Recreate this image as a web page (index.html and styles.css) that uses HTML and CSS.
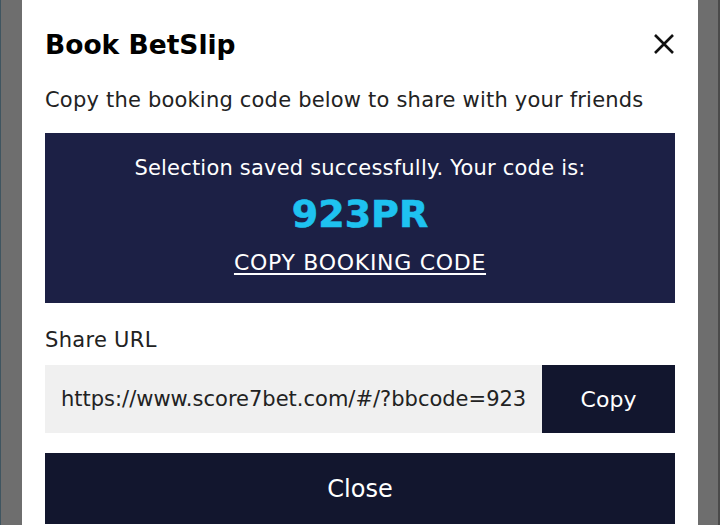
FILE: index.html
```html
<!DOCTYPE html>
<html lang="en">
<head>
<meta charset="utf-8">
<title>Book BetSlip</title>
<link rel="stylesheet" href="styles.css">
</head>
<body>
<div class="backdrop">
  <div class="modal">
    <div class="header">
      <h1 class="title">Book BetSlip</h1>
      <button class="close-x" aria-label="Close">
        <svg width="22" height="22" viewBox="0 0 22 22"><path d="M2 2 L20 20 M20 2 L2 20" stroke="#111" stroke-width="2.6" fill="none"/></svg>
      </button>
    </div>
    <p class="subtitle">Copy the booking code below to share with your friends</p>
    <div class="code-box">
      <div class="code-msg">Selection saved successfully. Your code is:</div>
      <div class="code">923PR</div>
      <a class="copy-code" href="#">COPY BOOKING CODE</a>
    </div>
    <div class="share-label">Share URL</div>
    <div class="share-row">
      <input class="share-input" type="text" value="https://www.score7bet.com/#/?bbcode=923PR" readonly>
      <button class="copy-btn">Copy</button>
    </div>
    <button class="close-btn">Close</button>
  </div>
</div>
</body>
</html>
```
FILE: styles.css
```css
html, body {
  margin: 0;
  padding: 0;
  height: 100%;
}
body {
  background: #6e6e6e;
  font-family: "DejaVu Sans", "Liberation Sans", sans-serif;
  overflow: hidden;
}
.backdrop {
  height: 525px;
  padding: 0 20px 0 21px;
  box-sizing: border-box;
  border-left: 1px solid #3f5560;
  border-right: 2px solid #4a4a4a;
}
.modal {
  background: #fff;
  height: 100%;
  padding: 22px 23px 0 23px;
  box-sizing: border-box;
  display: flex;
  flex-direction: column;
}
.header {
  display: flex;
  align-items: center;
  justify-content: space-between;
  height: 44px;
}
.title {
  margin: 0;
  font-size: 26.5px;
  font-weight: 700;
  color: #000;
}
.close-x {
  background: none;
  border: 0;
  padding: 0;
  width: 22px;
  height: 22px;
}
.subtitle {
  margin: 20px 0 0;
  font-size: 21px;
  letter-spacing: 0.2px;
  line-height: 28px;
  color: #222;
}
.code-box {
  margin-top: 19px;
  height: 170px;
  background: #1c2045;
  color: #fff;
  display: flex;
  flex-direction: column;
  align-items: center;
  padding-top: 21px;
  box-sizing: border-box;
}
.code-msg {
  font-size: 21px;
  letter-spacing: 0.2px;
  line-height: 28px;
}
.code {
  font-size: 38px;
  font-weight: 700;
  color: #1ec2f0;
  line-height: 46px;
  margin-top: 9px;
  -webkit-text-stroke: 0.6px #1ec2f0;
}
.copy-code {
  color: #fff;
  font-size: 22px;
  letter-spacing: 0.7px;
  line-height: 28px;
  margin-top: 12px;
  text-decoration: underline;
  text-decoration-thickness: 2px;
  text-underline-offset: 3px;
}
.share-label {
  margin-top: 23px;
  font-size: 21px;
  letter-spacing: 0.3px;
  line-height: 28px;
  color: #222;
}
.share-row {
  display: flex;
  margin-top: 11px;
  height: 68px;
}
.share-input {
  flex: 1;
  min-width: 0;
  border: 0;
  background: #f0f0f0;
  padding: 0 16px;
  font-family: inherit;
  font-size: 21px;
  color: #222;
  outline: none;
}
.copy-btn {
  width: 133px;
  border: 0;
  background: #12162e;
  color: #fff;
  font-family: inherit;
  font-size: 22px;
}
.close-btn {
  margin-top: 20px;
  height: 71px;
  border: 0;
  background: #12162e;
  color: #fff;
  font-family: inherit;
  font-size: 24px;
}
```
